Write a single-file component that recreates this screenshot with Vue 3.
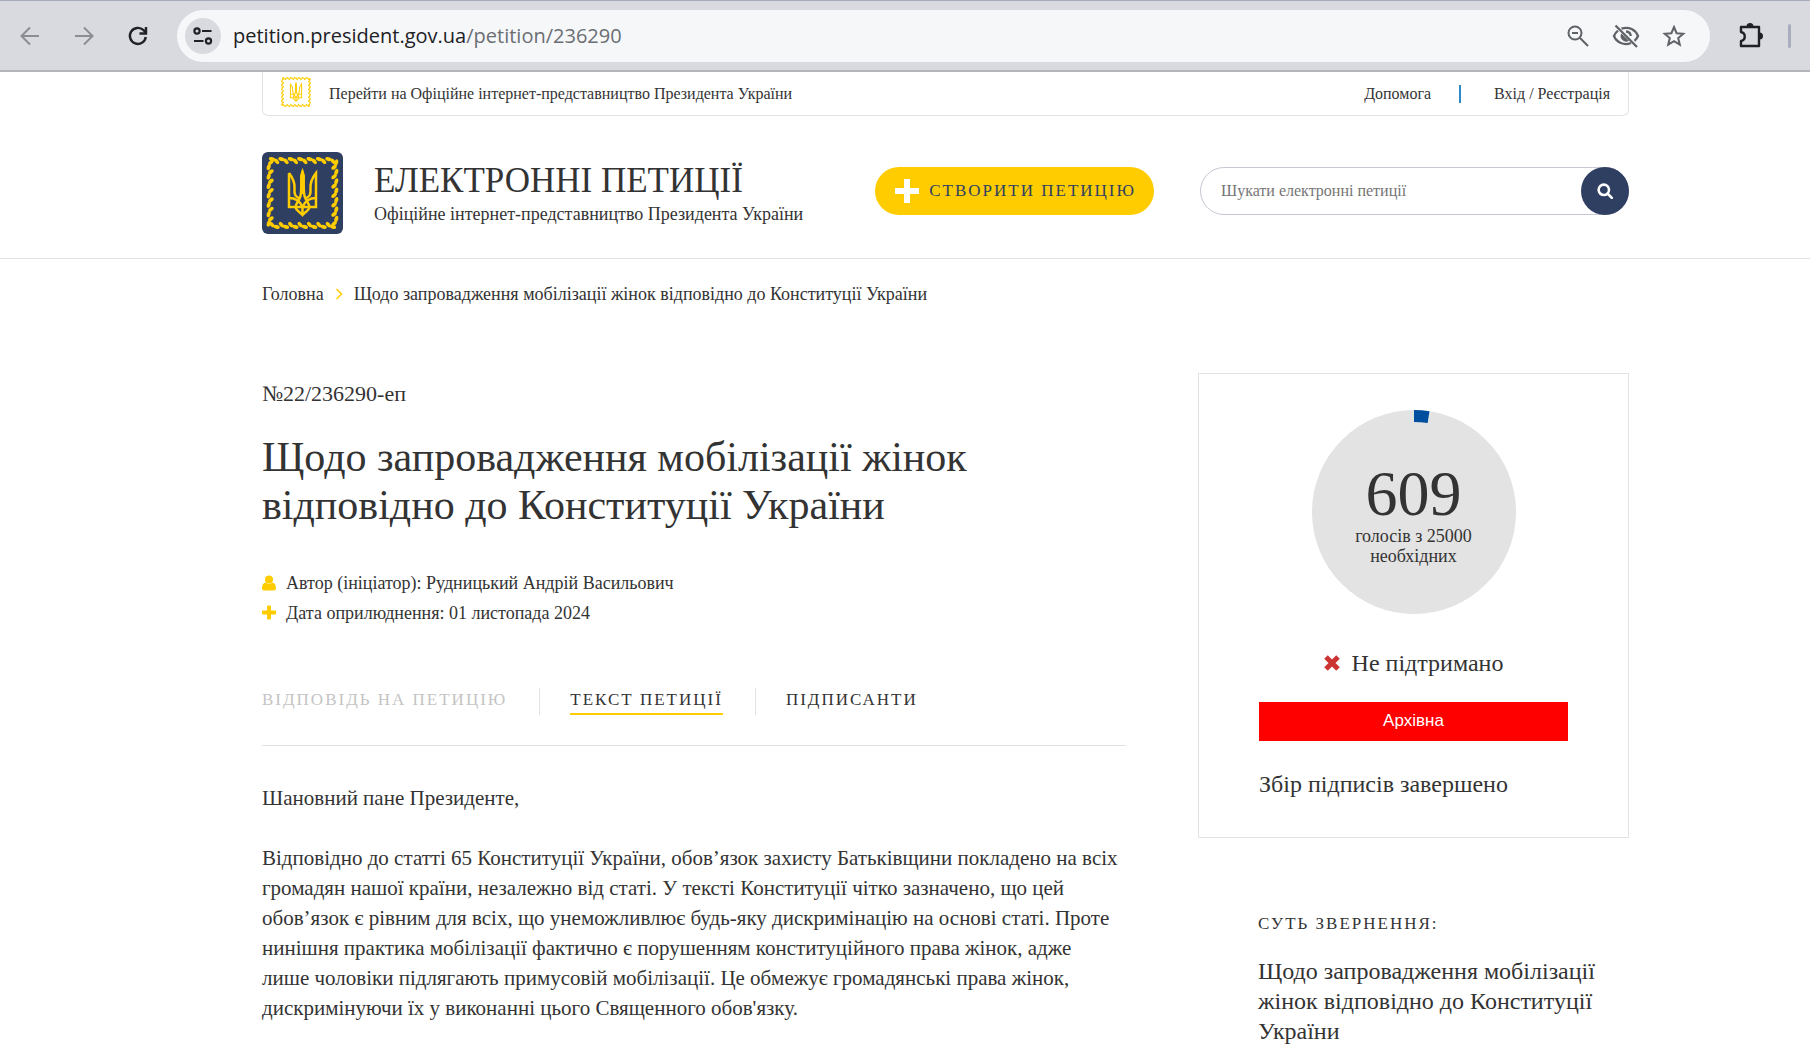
<script setup>
import { ref } from 'vue'

const query = ref('')
const votes = 609
const needed = 25000

const tabs = [
  { label: 'Відповідь на петицію', state: 'muted' },
  { label: 'Текст петиції', state: 'active' },
  { label: 'Підписанти', state: '' },
]

const paragraphs = [
  'Шановний пане Президенте,',
  'Відповідно до статті 65 Конституції України, обов’язок захисту Батьківщини покладено на всіх громадян нашої країни, незалежно від статі. У тексті Конституції чітко зазначено, що цей обов’язок є рівним для всіх, що унеможливлює будь-яку дискримінацію на основі статі. Проте нинішня практика мобілізації фактично є порушенням конституційного права жінок, адже лише чоловіки підлягають примусовій мобілізації. Це обмежує громадянські права жінок, дискримінуючи їх у виконанні цього Священного обов\'язку.',
]

// Leaves of the ornamental frame round the trident, side by side along each edge
const leaves = []
for (let side = 0; side < 4; side++) {
  for (let i = 0; i < 14; i++) {
    const x = 10 + i * 4.7
    const y = 8 + (i % 2 ? 1.4 : -0.8)
    const tilt = i % 2 ? 50 : 15
    leaves.push(`rotate(${side * 90} 40.5 41) translate(${x} ${y}) rotate(${tilt})`)
  }
}
</script>

<template>
  <div class="page">
    <svg class="defs" aria-hidden="true">
      <symbol id="emblem" viewBox="0 0 81 82">
        <g fill="currentColor">
          <ellipse v-for="(t, i) in leaves" :key="i" rx="3.2" ry="1.9" :transform="t" />
        </g>
        <g fill="none" stroke="currentColor" stroke-width="2.5" stroke-linejoin="miter">
          <path d="M27 21V55H54V21C50 26 48 31 48.500 37C49 43 47.500 45 43 46.500" />
          <path d="M27 21C31 26 33 31 32.500 37C32 43 33.500 45 38 46.500" />
          <path d="M40.500 20C38.500 26 40 38 38.500 44C37.500 48 34 51 33.500 55C34 59 38 60 40.500 63C43 60 47 59 47.500 55C47 51 43.500 48 42.500 44C41 38 42.500 26 40.500 20Z" />
          <path d="M27 46C33 46 38 49 40.500 55C43 49 48 46 54 46M40.500 54V63" />
        </g>
        <path fill="currentColor" d="M40.500 16L43 24L42 42H39L38 24Z" />
      </symbol>
    </svg>

    <div class="browser">
      <nav class="browser-nav">
        <button type="button" class="icon-btn dim" aria-label="Назад">
          <svg width="24" height="24" viewBox="0 0 24 24" fill="none" stroke="currentColor" stroke-width="2"><path d="M21 12H4M12 3.500L3.500 12L12 20.500" /></svg>
        </button>
        <button type="button" class="icon-btn dim" aria-label="Вперед">
          <svg width="24" height="24" viewBox="0 0 24 24" fill="none" stroke="currentColor" stroke-width="2"><path d="M3 12H20M12 3.500L20.500 12L12 20.500" /></svg>
        </button>
        <button type="button" class="icon-btn" aria-label="Оновити">
          <svg width="24" height="24" viewBox="0 0 24 24" fill="none" stroke="currentColor" stroke-width="2.400"><path d="M19.800 13A8 8 0 1 1 17.500 6.200L20 8.700" /><path d="M20 3V9.500H13.500" /></svg>
        </button>
      </nav>
      <div class="omnibox">
        <button type="button" class="site-info" aria-label="Відомості про сайт">
          <svg width="20" height="20" viewBox="0 0 20 20" fill="none" stroke="currentColor" stroke-width="2.200"><circle cx="4" cy="5" r="2.600" /><path d="M9 5H18.500M1 15H10.500" /><circle cx="15.500" cy="15" r="2.600" /></svg>
        </button>
        <span class="url">petition.president.gov.ua<span class="path">/petition/236290</span></span>
        <div class="omni-icons">
          <button type="button" class="icon-btn grey" aria-label="Масштаб">
            <svg width="24" height="24" viewBox="0 0 24 24" fill="none" stroke="currentColor" stroke-width="2"><circle cx="9" cy="9" r="6.500" /><path d="M13.800 13.800L22 22M6 9H12" /></svg>
          </button>
          <button type="button" class="icon-btn grey" aria-label="Стеження заблоковано">
            <svg width="28" height="24" viewBox="0 0 28 24" fill="none" stroke="currentColor" stroke-width="2.300"><path d="M9.500 4.700C17 2 23.500 6 26 12C25.200 14 24 15.500 22.500 16.800M19 19C12 22 4.500 18.500 2 12C2.800 9.800 4.200 8 6 6.600M3.500 1.500L25 23" /><path d="M9.300 9.500A5.500 5.500 0 0 0 17 16.800Z" fill="currentColor" stroke="none" /><path d="M14 7.500A5 5 0 0 1 18.800 12" /></svg>
          </button>
          <button type="button" class="icon-btn grey" aria-label="Додати закладку">
            <svg width="24" height="24" viewBox="0 0 24 24" fill="none" stroke="currentColor" stroke-width="2"><path d="M12 3L14.600 9.200L21.300 9.700L16.200 14.100L17.800 20.700L12 17.200L6.200 20.700L7.800 14.100L2.700 9.700L9.400 9.200Z" /></svg>
          </button>
        </div>
      </div>
      <button type="button" class="icon-btn" aria-label="Розширення">
        <svg width="26" height="26" viewBox="0 0 26 26" fill="none" stroke="currentColor" stroke-width="2.400" stroke-linejoin="round"><path d="M3 4H21V23H3V18C8 17 8 10 3 9Z" /><path d="M8.500 3.500A3.500 3.500 0 0 1 15.500 3.500ZM21.500 9.500A3.500 3.500 0 0 1 21.500 16.500Z" fill="currentColor" stroke="none" /></svg>
      </button>
      <span class="browser-sep"></span>
    </div>

    <header class="header">
      <div class="wrap">
        <div class="topbar">
          <a href="#" class="to-site">
            <svg width="34" height="34" class="gold"><use href="#emblem" /></svg>
            <span>Перейти на Офіційне інтернет-представництво Президента України</span>
          </a>
          <div class="account">
            <a href="#">Допомога</a>
            <span class="bar"></span>
            <a href="#">Вхід / Реєстрація</a>
          </div>
        </div>
        <div class="masthead">
          <a href="#" class="logo" aria-label="Електронні петиції">
            <svg width="81" height="82"><use href="#emblem" /></svg>
          </a>
          <div class="brand">
            <div class="brand-title">ЕЛЕКТРОННІ ПЕТИЦІЇ</div>
            <div class="brand-sub">Офіційне інтернет-представництво Президента України</div>
          </div>
          <div class="actions">
            <button type="button" class="create">
              <svg width="24" height="24" viewBox="0 0 24 24"><path d="M9 0H15V9H24V15H15V24H9V15H0V9H9Z" fill="#fff" /></svg>
              <span>СТВОРИТИ ПЕТИЦІЮ</span>
            </button>
            <form class="search" @submit.prevent>
              <input v-model="query" type="text" aria-label="Шукати електронні петиції" placeholder="Шукати електронні петиції" />
              <button type="submit" aria-label="Шукати">
                <svg width="16" height="16" viewBox="0 0 16 16" fill="none" stroke="#fff" stroke-width="2.600"><circle cx="6.800" cy="6.800" r="5.200" /><path d="M10.500 10.500L14.800 14.800" stroke-linecap="round" /></svg>
              </button>
            </form>
          </div>
        </div>
      </div>
    </header>

    <main class="wrap">
      <nav class="crumbs">
        <a href="#">Головна</a>
        <svg width="8" height="12" viewBox="0 0 8 12" fill="none" stroke="#fc0" stroke-width="1.500"><path d="M1.500 1L6.500 6L1.500 11" /></svg>
        <span>Щодо запровадження мобілізації жінок відповідно до Конституції України</span>
      </nav>

      <div class="columns">
        <article class="petition">
          <div class="number">№22/236290-еп</div>
          <h1>Щодо запровадження мобілізації жінок відповідно до Конституції України</h1>
          <ul class="meta">
            <li>
              <svg width="14" height="16" viewBox="0 0 14 16" fill="#fc0"><circle cx="7" cy="4.500" r="4" /><path d="M3.500 7.500C5.500 9.300 8.500 9.300 10.500 7.500C13 8 14 10.500 14 13.500Q14 15.500 12 15.500H2Q0 15.500 0 13.500C0 10.500 1 8 3.500 7.500Z" /></svg>
              <span>Автор (ініціатор): Рудницький Андрій Васильович</span>
            </li>
            <li>
              <svg width="14" height="16" viewBox="0 0 14 16" fill="#fc0"><path d="M5 1.500Q5 .5 6 .5H8Q9 .5 9 1.500V5.500H13Q14 5.500 14 6.500V8.500Q14 9.500 13 9.500H9V13.500Q9 14.500 8 14.500H6Q5 14.500 5 13.500V9.500H1Q0 9.500 0 8.500V6.500Q0 5.500 1 5.500H5Z" /></svg>
              <span>Дата оприлюднення: 01 листопада 2024</span>
            </li>
          </ul>
          <nav class="tabs">
            <a v-for="tab in tabs" :key="tab.label" href="#" :class="['tab', tab.state]"><span>{{ tab.label }}</span></a>
          </nav>
          <div class="text">
            <p v-for="p in paragraphs" :key="p">{{ p }}</p>
          </div>
        </article>

        <aside class="side">
          <section class="card">
            <div class="gauge">
              <svg width="204" height="204" viewBox="0 0 204 204" class="ring">
                <circle cx="102" cy="102" r="102" fill="#e3e3e3" />
                <circle cx="102" cy="102" r="96" fill="none" stroke="#004f9f" stroke-width="12" pathLength="25000" :stroke-dasharray="votes + ' ' + needed" transform="rotate(-90 102 102)" />
              </svg>
              <div class="count">{{ votes }}</div>
              <div class="caption">голосів з {{ needed }}<br />необхідних</div>
            </div>
            <div class="verdict">
              <svg width="16" height="16" viewBox="0 0 16 16" stroke="#cc3333" stroke-width="5"><path d="M2 2L14 14M14 2L2 14" /></svg>
              <span>Не підтримано</span>
            </div>
            <button type="button" class="archive">Архівна</button>
            <div class="closed">Збір підписів завершено</div>
          </section>
          <section class="essence">
            <h2>Суть звернення:</h2>
            <p>Щодо запровадження мобілізації жінок відповідно до Конституції України</p>
          </section>
        </aside>
      </div>
    </main>
  </div>
</template>

<style>
html {
  overflow: hidden;
}
body {
  margin: 0;
  background: #fff;
}
</style>

<style scoped>
.page {
  height: 100vh;
  overflow: hidden;
  color: #333;
  font-family: "Liberation Serif", serif;
  font-size: 18px;
}
* {
  box-sizing: border-box;
}
a {
  color: inherit;
  text-decoration: none;
}
button {
  padding: 0;
  border: 0;
  background: none;
  color: inherit;
  font: inherit;
  cursor: pointer;
}
svg {
  display: block;
  flex: none;
}
.defs {
  position: absolute;
  width: 0;
  height: 0;
}

/* Browser toolbar */
.browser {
  display: flex;
  align-items: center;
  height: 72px;
  padding: 0 19px 0 18px;
  border-top: 1px solid #a6acbe;
  border-bottom: 2px solid #b4b4ba;
  background: #d9dae0;
}
.browser-nav {
  display: flex;
  gap: 30px;
}
.icon-btn {
  color: #202124;
}
.dim {
  color: #8b8d92;
}
.grey {
  color: #5f6368;
}
.omnibox {
  flex: 1;
  display: flex;
  align-items: center;
  height: 52px;
  margin: 0 28px 0 27px;
  padding: 0 24px 0 8px;
  border-radius: 26px;
  background: #f6f7f9;
}
.site-info {
  display: flex;
  align-items: center;
  justify-content: center;
  width: 36px;
  height: 36px;
  border-radius: 50%;
  background: #d9dae0;
  color: #202124;
}
.url {
  margin-left: 12px;
  color: #202124;
  font-family: "Open Sans", "Noto Sans", sans-serif;
  font-size: 20px;
}
.path {
  color: #6b6e73;
}
.omni-icons {
  display: flex;
  gap: 22px;
  margin-left: auto;
}
.browser-sep {
  width: 3px;
  height: 24px;
  margin-left: 24px;
  border-radius: 2px;
  background: #a9aebf;
}

/* Site header */
.wrap {
  padding: 0 181px 0 262px;
}
.header {
  border-bottom: 1px solid #e3e3e3;
}
.topbar {
  display: flex;
  align-items: center;
  justify-content: space-between;
  height: 44px;
  padding: 0 18px 0 16px;
  border: 1px solid #e3e3e3;
  border-top: 0;
  border-radius: 0 0 6px 6px;
  font-size: 16px;
}
.to-site {
  display: flex;
  align-items: center;
  gap: 16px;
}
.gold {
  margin-bottom: 4px;
  color: #fc0;
}
.account {
  display: flex;
  align-items: center;
}
.bar {
  width: 2px;
  height: 18px;
  margin: 0 33px 0 28px;
  background: #2d8ac7;
}
.masthead {
  display: flex;
  align-items: center;
  padding: 36px 0 24px;
}
.logo {
  border-radius: 6px;
  background: #2f3f61;
  color: #fc0;
}
.brand {
  flex: 1;
  margin-left: 31px;
  padding-top: 2px;
  white-space: nowrap;
}
.brand-title {
  font-size: 35px;
  line-height: 40px;
}
.brand-sub {
  font-size: 18px;
  line-height: 26px;
}
.actions {
  display: flex;
  gap: 46px;
  padding-bottom: 4px;
}
.create {
  display: flex;
  align-items: center;
  gap: 10px;
  height: 48px;
  padding: 0 18px 0 20px;
  border-radius: 24px;
  background: #fc0;
  color: #2f3f61;
  font-size: 17px;
  letter-spacing: 2px;
}
.search {
  display: flex;
  width: 429px;
  height: 48px;
  border: 1px solid #c9c6d6;
  border-radius: 24px;
}
.search input {
  flex: 1;
  min-width: 0;
  padding: 0 20px;
  border: 0;
  outline: 0;
  background: none;
  color: #333;
  font: 16px "Liberation Serif", serif;
}
.search input::placeholder {
  color: #757575;
}
.search button {
  display: flex;
  align-items: center;
  justify-content: center;
  width: 48px;
  height: 48px;
  margin: -1px;
  border-radius: 50%;
  background: #2f3f61;
}

/* Petition */
.crumbs {
  display: flex;
  align-items: center;
  gap: 11px;
  padding-top: 23px;
  font-size: 18px;
  line-height: 24px;
}
.columns {
  display: flex;
  align-items: flex-start;
  justify-content: space-between;
  gap: 72px;
  padding-top: 67px;
}
.petition {
  flex: 1;
  min-width: 0;
}
.number {
  padding-top: 9px;
  font-size: 22px;
  line-height: 24px;
}
h1 {
  margin: 27px 0 0;
  max-width: 800px;
  font-size: 42px;
  font-weight: 400;
  line-height: 48px;
}
.meta {
  margin: 39px 0 0;
  padding: 0;
  list-style: none;
  font-size: 18px;
  line-height: 30px;
}
.meta li {
  display: flex;
  align-items: center;
  gap: 10px;
}
.tabs {
  display: flex;
  margin-top: 60px;
  padding-bottom: 30px;
  border-bottom: 1px solid #e3e3e3;
  font-size: 17px;
  line-height: 24px;
  letter-spacing: 2px;
  text-transform: uppercase;
}
.tab {
  padding-right: 32px;
}
.tab + .tab {
  padding-left: 30px;
  border-left: 1px solid #e3e3e3;
}
.tab span {
  display: block;
  height: 27px;
}
.muted {
  color: #c4c4c4;
}
.active span {
  border-bottom: 2px solid #fc0;
}
.text {
  padding: 37px 7px 0 0;
  font-size: 21px;
  line-height: 30px;
}
.text p {
  margin: 0 0 30px;
}

/* Sidebar */
.side {
  width: 431px;
}
.card {
  display: flex;
  flex-direction: column;
  align-items: center;
  padding: 36px 60px 38px;
  border: 1px solid #e3e3e3;
}
.gauge {
  position: relative;
  width: 204px;
  height: 204px;
  padding-top: 52px;
  text-align: center;
}
.ring {
  position: absolute;
  inset: 0;
}
.count,
.caption {
  position: relative;
}
.count {
  font-size: 64px;
  line-height: 64px;
}
.caption {
  font-size: 18px;
  line-height: 20px;
}
.verdict {
  display: flex;
  align-items: center;
  gap: 12px;
  margin-top: 34px;
  font-size: 24px;
  line-height: 30px;
}
.archive {
  width: 100%;
  height: 39px;
  margin-top: 24px;
  padding-bottom: 2px;
  background: #f00;
  color: #fff;
  font-family: "Liberation Sans", sans-serif;
  font-size: 17px;
}
.closed {
  width: 100%;
  margin-top: 28px;
  font-size: 24px;
  line-height: 30px;
}
.essence {
  padding: 74px 0 0 60px;
}
h2 {
  margin: 0;
  font-size: 17px;
  font-weight: 400;
  line-height: 24px;
  letter-spacing: 2px;
  text-transform: uppercase;
}
.essence p {
  margin: 20px 0 0;
  font-size: 24px;
  line-height: 30px;
}
</style>
